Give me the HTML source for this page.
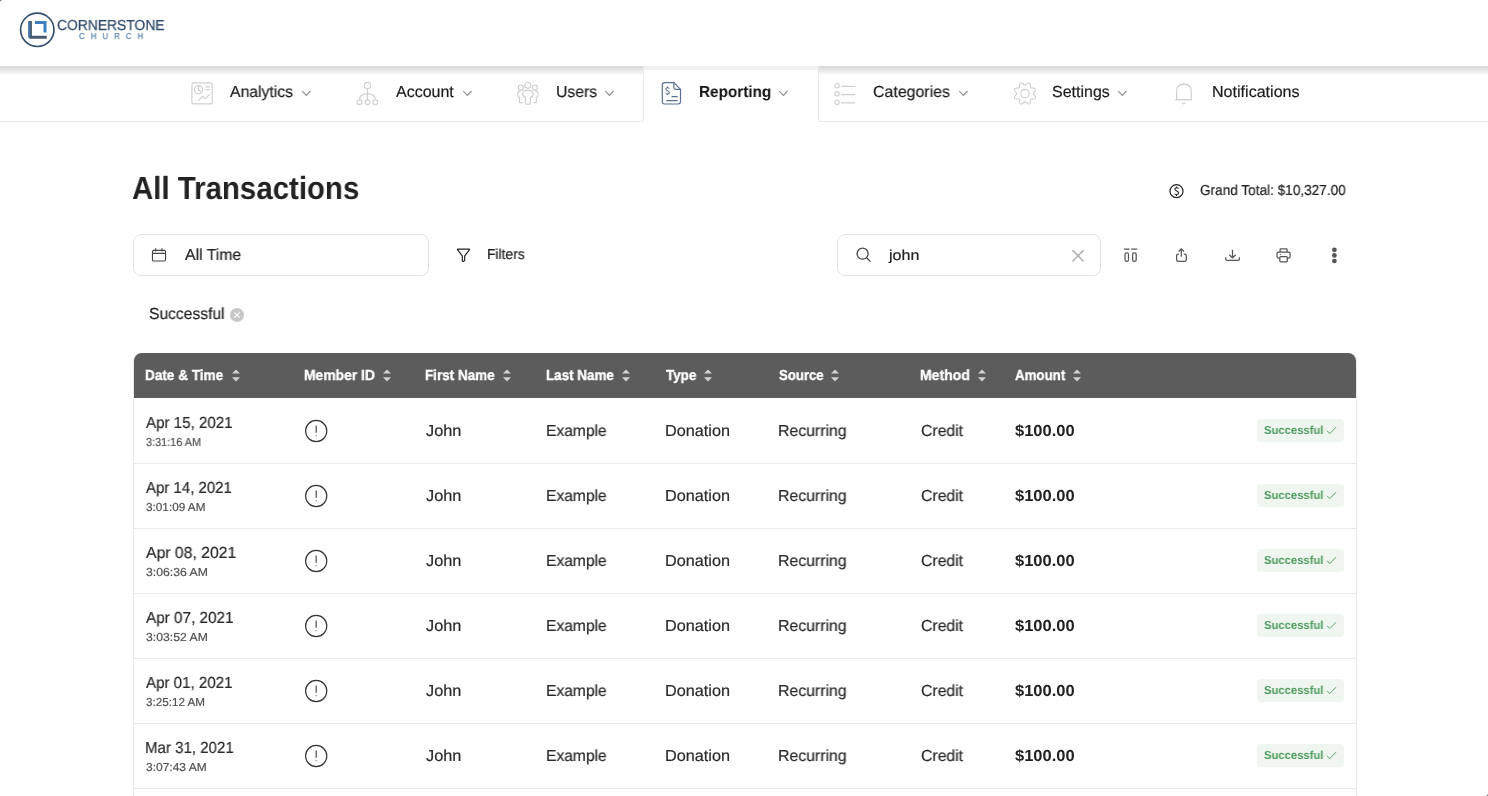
<!DOCTYPE html><html><head><meta charset="utf-8"><style>
html,body{margin:0;padding:0;background:#fff;width:1488px;height:796px;overflow:hidden;position:relative}
.t{will-change:transform}
.r{-webkit-text-stroke:0.2px currentColor}
body{font-family:"Liberation Sans",sans-serif;text-rendering:geometricPrecision}
.a{position:absolute}
.t{position:absolute;white-space:nowrap;line-height:1;transform-origin:0 0}
svg{overflow:visible}
</style></head><body>
<div class="a" style="left:0;top:0;width:1px;height:1px;background:#7a7a7a"></div><div class="a" style="left:1px;top:0;width:1px;height:1px;background:#d0d0d0"></div><div class="a" style="left:0;top:1px;width:1px;height:1px;background:#d0d0d0"></div>
<div class="a" style="left:1487px;top:795px;width:1px;height:1px;background:#7a7a7a"></div><div class="a" style="left:1486px;top:795px;width:1px;height:1px;background:#d0d0d0"></div><div class="a" style="left:1487px;top:794px;width:1px;height:1px;background:#d0d0d0"></div>
<svg class="a" style="left:0;top:0" width="180" height="60" viewBox="0 0 180 60">
<circle cx="37.3" cy="29.8" r="16.7" fill="none" stroke="#36516f" stroke-width="1.7"/>
<path d="M28.3 21 h3.6 v14.7 h14.9 v3 h-16.5 a2 2 0 0 1 -2 -2 z" fill="#4a5a6c"/>
<path d="M28.6 22 h1.6 v15.6 h-1.6 z" fill="#3b78b8"/>
<path d="M34.9 21 h11.6 v11.6 h-3 v-8.6 h-8.6 z" fill="#3d80c0"/>
</svg>
<div class="t r" style="left:57.01px;top:19px;font-size:14.5px;color:#2f4a68;transform:scaleX(0.9561);-webkit-text-stroke:0.25px #2f4a68;">CORNERSTONE</div>
<div class="t r" style="left:78.60px;top:32px;font-size:8.7px;color:#5b87b0;letter-spacing:6.5px;transform:scaleX(0.9169);-webkit-text-stroke:0.25px #5b87b0;">CHURCH</div>
<div class="a" style="left:0;top:66px;width:644px;height:56px;box-sizing:border-box;border-right:1px solid #e9e9e9;border-bottom:1px solid #e9e9e9;border-radius:0 0 3px 0;background:linear-gradient(#d9d9d9 0px,#e0e1e1 3px,#e8e8e8 4.5px,#f0f1f1 6.5px,#fafafa 8px,#fff 9px)"></div>
<div class="a" style="left:818px;top:66px;width:670px;height:56px;box-sizing:border-box;border-left:1px solid #e9e9e9;border-bottom:1px solid #e9e9e9;border-radius:0 0 0 3px;background:linear-gradient(#d9d9d9 0px,#e0e1e1 3px,#e8e8e8 4.5px,#f0f1f1 6.5px,#fafafa 8px,#fff 9px)"></div>
<div class="a" style="left:644px;top:66px;width:174px;height:4px;background:#f0f1f1"></div>
<div class="t r" style="left:230.36px;top:85px;font-size:16.0px;color:#1c1c1c;transform:scaleX(0.9852);">Analytics</div>
<div class="t r" style="left:395.96px;top:85px;font-size:16.0px;color:#1c1c1c;">Account</div>
<div class="t r" style="left:555.78px;top:85px;font-size:16.0px;color:#1c1c1c;transform:scaleX(0.9850);">Users</div>
<div class="t" style="left:698.97px;top:85px;font-size:16.0px;font-weight:700;color:#111;transform:scaleX(0.9564);">Reporting</div>
<div class="t r" style="left:873.21px;top:85px;font-size:16.0px;color:#1c1c1c;transform:scaleX(0.9934);">Categories</div>
<div class="t r" style="left:1052.28px;top:85px;font-size:16.0px;color:#1c1c1c;transform:scaleX(0.9979);">Settings</div>
<div class="t r" style="left:1211.57px;top:85px;font-size:16.0px;color:#1c1c1c;transform:scaleX(1.0049);">Notifications</div>
<svg class="a" style="left:301.7px;top:90px" width="10" height="7" viewBox="0 0 10 7"><path d="M0.3 1.1 L4.4 5.3 L8.5 1.0" fill="none" stroke="#8f8f8f" stroke-width="1.2"/></svg>
<svg class="a" style="left:462.7px;top:90px" width="10" height="7" viewBox="0 0 10 7"><path d="M0.3 1.1 L4.4 5.3 L8.5 1.0" fill="none" stroke="#8f8f8f" stroke-width="1.2"/></svg>
<svg class="a" style="left:605.1px;top:90px" width="10" height="7" viewBox="0 0 10 7"><path d="M0.3 1.1 L4.4 5.3 L8.5 1.0" fill="none" stroke="#8f8f8f" stroke-width="1.2"/></svg>
<svg class="a" style="left:778.9px;top:90px" width="10" height="7" viewBox="0 0 10 7"><path d="M0.3 1.1 L4.4 5.3 L8.5 1.0" fill="none" stroke="#8f8f8f" stroke-width="1.2"/></svg>
<svg class="a" style="left:958.5px;top:90px" width="10" height="7" viewBox="0 0 10 7"><path d="M0.3 1.1 L4.4 5.3 L8.5 1.0" fill="none" stroke="#8f8f8f" stroke-width="1.2"/></svg>
<svg class="a" style="left:1118.2px;top:90px" width="10" height="7" viewBox="0 0 10 7"><path d="M0.3 1.1 L4.4 5.3 L8.5 1.0" fill="none" stroke="#8f8f8f" stroke-width="1.2"/></svg>
<svg class="a" style="left:190px;top:81px" width="24" height="24" viewBox="0 0 24 24" fill="none" stroke="#cfcfcf" stroke-width="1.15">
<rect x="1.9" y="1.8" width="20.3" height="21" rx="1.6"/>
<circle cx="8.5" cy="8.7" r="4.1"/><path d="M8.5 4.6 V8.7 L11.4 11.6"/>
<path d="M15.6 5.9 h4.2 M15.6 8.7 h4.2" stroke-width="1.3"/>
<path d="M8.3 19.6 L12.6 15.3 L15.4 17.6 L19.8 13.4"/>
</svg>
<svg class="a" style="left:356px;top:82px" width="23" height="24" viewBox="0 0 23 24" fill="none" stroke="#cfcfcf" stroke-width="1.15">
<circle cx="11.5" cy="3.4" r="3.1"/><path d="M11.5 6.5 V17.8"/>
<path d="M3.5 17.6 Q3.6 11.8 11.5 11.8 Q19.3 11.8 19.3 17.6"/>
<circle cx="3.5" cy="20.2" r="2.4"/><circle cx="11.5" cy="20.2" r="2.4"/><circle cx="19.3" cy="20.2" r="2.4"/>
</svg>
<svg class="a" style="left:515px;top:81px" width="26" height="25" viewBox="0 0 26 25" fill="none" stroke="#cfcfcf" stroke-width="1.15">
<circle cx="12.85" cy="4.2" r="3"/><circle cx="5.9" cy="6.5" r="2.5"/><circle cx="19.9" cy="6.5" r="2.5"/>
<path d="M10.4 16.4 Q7.6 15.6 7.6 12.8 Q7.6 9.1 12.85 9.1 Q18.1 9.1 18.1 12.8 Q18.1 15.6 15.4 16.4 V22 Q15.4 23.3 12.85 23.3 Q10.4 23.3 10.4 22 Z"/>
<path d="M6.2 9.6 Q2.7 10 2.7 13.6 Q2.7 15.6 4.5 16.6 V21.6 H7.4"/>
<path d="M19.6 9.6 Q23.1 10 23.1 13.6 Q23.1 15.6 21.3 16.6 V21.6 H18.4"/>
</svg>
<svg class="a" style="left:660px;top:81px" width="23" height="25" viewBox="0 0 23 25" fill="none" stroke="#5a7191" stroke-width="1.2" stroke-linejoin="round">
<path d="M4.6 1.6 H13.9 L20.5 8.3 V20.6 Q20.5 23 18.1 23 H4.7 Q2.3 23 2.3 20.6 V4 Q2.3 1.6 4.6 1.6 Z"/>
<path d="M13.9 1.6 V6.8 Q13.9 8.3 15.4 8.3 H20.5"/>
<path d="M11.5 15.5 H17.7 M6.3 19.6 H17.7" stroke-width="1.25"/>
<path d="M9.3 7.6 Q8.9 6.8 7.5 6.8 Q5.8 6.8 5.8 8.1 Q5.8 9.2 7.5 9.8 Q9.3 10.4 9.3 11.7 Q9.3 13 7.5 13 Q6.1 13 5.6 12.2 M7.4 5.6 V6.8 M7.4 13 V14.1" stroke-width="1.1"/>
</svg>
<svg class="a" style="left:833px;top:82px" width="24" height="24" viewBox="0 0 24 24" fill="none" stroke="#cfcfcf" stroke-width="1.15">
<circle cx="4.06" cy="3.7" r="2.2"/><circle cx="4.06" cy="11.85" r="2.2"/><circle cx="4.06" cy="20.15" r="2.2"/>
<path d="M8.2 4.3 H22.2 M8.2 12.6 H22.2 M8.2 20.9 H22.2" stroke-width="1.25"/>
</svg>
<svg class="a" style="left:1011.6px;top:81px" width="26" height="25" viewBox="0 0 26 25" fill="none" stroke="#cfcfcf" stroke-width="1.15" stroke-linejoin="round">
<path d="M13.00 4.25 L13.44 4.13 L13.92 3.79 L14.46 3.29 L15.07 2.76 L15.74 2.29 L16.42 1.99 L17.06 1.94 L17.60 2.16 L18.02 2.65 L18.29 3.34 L18.43 4.15 L18.48 4.96 L18.51 5.69 L18.61 6.27 L18.83 6.67 L19.23 6.89 L19.81 6.99 L20.54 7.02 L21.35 7.07 L22.16 7.21 L22.85 7.48 L23.34 7.90 L23.56 8.44 L23.51 9.08 L23.21 9.76 L22.74 10.43 L22.21 11.04 L21.71 11.58 L21.37 12.06 L21.25 12.50 L21.37 12.94 L21.71 13.42 L22.21 13.96 L22.74 14.57 L23.21 15.24 L23.51 15.92 L23.56 16.56 L23.34 17.10 L22.85 17.52 L22.16 17.79 L21.35 17.93 L20.54 17.98 L19.81 18.01 L19.23 18.11 L18.83 18.33 L18.61 18.73 L18.51 19.31 L18.48 20.04 L18.43 20.85 L18.29 21.66 L18.02 22.35 L17.60 22.84 L17.06 23.06 L16.42 23.01 L15.74 22.71 L15.07 22.24 L14.46 21.71 L13.92 21.21 L13.44 20.87 L13.00 20.75 L12.56 20.87 L12.08 21.21 L11.54 21.71 L10.93 22.24 L10.26 22.71 L9.58 23.01 L8.94 23.06 L8.40 22.84 L7.98 22.35 L7.71 21.66 L7.57 20.85 L7.52 20.04 L7.49 19.31 L7.39 18.73 L7.17 18.33 L6.77 18.11 L6.19 18.01 L5.46 17.98 L4.65 17.93 L3.84 17.79 L3.15 17.52 L2.66 17.10 L2.44 16.56 L2.49 15.92 L2.79 15.24 L3.26 14.57 L3.79 13.96 L4.29 13.42 L4.63 12.94 L4.75 12.50 L4.63 12.06 L4.29 11.58 L3.79 11.04 L3.26 10.43 L2.79 9.76 L2.49 9.08 L2.44 8.44 L2.66 7.90 L3.15 7.48 L3.84 7.21 L4.65 7.07 L5.46 7.02 L6.19 6.99 L6.77 6.89 L7.17 6.67 L7.39 6.27 L7.49 5.69 L7.52 4.96 L7.57 4.15 L7.71 3.34 L7.98 2.65 L8.40 2.16 L8.94 1.94 L9.58 1.99 L10.26 2.29 L10.93 2.76 L11.54 3.29 L12.08 3.79 L12.56 4.13 Z"/>
<circle cx="13" cy="12.5" r="4.2"/>
</svg>
<svg class="a" style="left:1174px;top:81px" width="20" height="26" viewBox="0 0 20 26" fill="none" stroke="#cfcfcf" stroke-width="1.15">
<path d="M9.9 1.3 v1.8"/>
<path d="M2.6 18.6 V10.5 Q2.6 3.1 9.9 3.1 Q17.3 3.1 17.3 10.5 V18.6"/>
<path d="M1.3 18.7 H18.3" stroke-width="1.3"/>
<path d="M8.2 21.6 L9.8 22.9 L11.4 21.6"/>
</svg>
<div class="t" style="left:132.36px;top:172px;font-size:32.0px;font-weight:700;color:#222;transform:scaleX(0.9195);">All Transactions</div>
<svg class="a" style="left:1168px;top:184px" width="17" height="16" viewBox="0 0 17 16" fill="none" stroke="#222" stroke-width="1.2">
<circle cx="8.5" cy="7.2" r="6.5"/>
</svg>
<svg class="a" style="left:1168px;top:184px" width="17" height="16" viewBox="0 0 17 16" fill="none" stroke="#222" stroke-width="1.1"><path d="M10.6 4.6 Q10.2 3.8 8.6 3.8 Q6.8 3.8 6.8 5.1 Q6.8 6.2 8.6 6.9 Q10.6 7.7 10.6 9 Q10.6 10.5 8.6 10.5 Q7.1 10.5 6.6 9.7 M8.5 2.4 v1.4 M8.5 10.5 v1.4"/></svg>
<div class="t r" style="left:1200.22px;top:184px;font-size:14.5px;color:#222;transform:scaleX(0.9382);">Grand Total: $10,327.00</div>
<div class="a" style="left:133px;top:234px;width:296px;height:42px;border:1px solid #e3e3e3;border-radius:8px;box-sizing:border-box"></div>
<svg class="a" style="left:151px;top:247px" width="16" height="16" viewBox="0 0 16 16" fill="none" stroke="#444" stroke-width="1.1">
<rect x="1.45" y="3.35" width="13.1" height="10.7" rx="1.2"/><path d="M1.45 6.4 h13.1 M4.7 1.2 v3.2 M11.0 1.2 v3.2" />
</svg>
<div class="t r" style="left:184.76px;top:248px;font-size:16.0px;color:#222;transform:scaleX(0.9865);">All Time</div>
<svg class="a" style="left:456px;top:248px" width="15" height="15" viewBox="0 0 15 15" fill="none" stroke="#222" stroke-width="1.2">
<path d="M1.9 1.2 H13.1 Q13.9 1.2 13.4 1.9 L8.7 7.9 V12 Q8.7 13.2 7.4 13.4 Q6.3 13.6 6.3 12.5 V7.9 L1.6 1.9 Q1.1 1.2 1.9 1.2 Z" stroke-linejoin="round"/>
</svg>
<div class="t r" style="left:486.56px;top:248px;font-size:14.5px;color:#222;transform:scaleX(0.9557);">Filters</div>
<div class="a" style="left:837px;top:234px;width:264px;height:42px;border:1px solid #e3e3e3;border-radius:8px;box-sizing:border-box"></div>
<svg class="a" style="left:855px;top:247px" width="18" height="17" viewBox="0 0 18 17" fill="none" stroke="#444" stroke-width="1.3">
<circle cx="7.6" cy="6.7" r="5.5"/><path d="M11.6 10.7 L15.5 14.6"/>
</svg>
<div class="t r" style="left:889.10px;top:249px;font-size:14.5px;color:#222;transform:scaleX(1.1072);">john</div>
<svg class="a" style="left:1070px;top:248px" width="16" height="16" viewBox="0 0 16 16" fill="none" stroke="#b3b3b3" stroke-width="1.6" stroke-linecap="round">
<path d="M2.9 2.6 L13.2 13 M13.2 2.6 L2.9 13"/>
</svg>
<svg class="a" style="left:1122px;top:246px" width="17" height="18" viewBox="0 0 17 18" fill="none" stroke="#555" stroke-width="1.25">
<path d="M1.9 3.15 h5.6 M9.2 3.15 h6"/>
<rect x="3.0" y="6.8" width="3.5" height="8.5" rx="1.6"/><rect x="10.6" y="6.8" width="3.6" height="8.5" rx="1.6"/>
</svg>
<svg class="a" style="left:1174px;top:247px" width="15" height="17" viewBox="0 0 15 17" fill="none" stroke="#555" stroke-width="1.25">
<path d="M7.3 9.8 V1.9 M4.7 4.5 L7.3 1.8 L10.0 4.5"/>
<path d="M5.0 7.1 H4.2 Q2.6 7.1 2.6 8.7 V12.7 Q2.6 14.3 4.2 14.3 H10.7 Q12.3 14.3 12.3 12.7 V8.7 Q12.3 7.1 10.7 7.1 H9.8"/>
</svg>
<svg class="a" style="left:1224px;top:248px" width="17" height="15" viewBox="0 0 17 15" fill="none" stroke="#555" stroke-width="1.25">
<path d="M8.5 1.7 V9.8 M5.3 6.7 L8.5 9.9 L11.7 6.7"/>
<path d="M1.7 9.3 V11 Q1.7 12.4 3.1 12.4 H14 Q15.4 12.4 15.4 11 V9.3"/>
</svg>
<svg class="a" style="left:1275px;top:247px" width="18" height="17" viewBox="0 0 18 17" fill="none" stroke="#555" stroke-width="1.25">
<path d="M5.1 5 V2.6 Q5.1 1.9 5.9 1.9 H11.3 Q12.1 1.9 12.1 2.6 V5"/>
<path d="M4.6 11 H3.6 Q2 11 2 9.4 V6.6 Q2 5 3.6 5 H13.5 Q15.1 5 15.1 6.6 V9.4 Q15.1 11 13.5 11 H12.5"/>
<rect x="4.8" y="9.7" width="7.5" height="5.1" rx="1"/>
<path d="M4.9 7.5 h0.9" stroke-width="1"/>
</svg>
<svg class="a" style="left:1330px;top:246px" width="9" height="18" viewBox="0 0 9 18" fill="#555">
<circle cx="4.4" cy="3.8" r="2.35"/><circle cx="4.4" cy="9.4" r="2.35"/><circle cx="4.4" cy="15" r="2.35"/>
</svg>
<div class="t r" style="left:148.60px;top:307px;font-size:16.0px;color:#222;transform:scaleX(0.9767);">Successful</div>
<svg class="a" style="left:229px;top:307px" width="16" height="16" viewBox="0 0 16 16">
<circle cx="8" cy="8" r="7" fill="#c8c8c8"/><path d="M5.3 5.3 L10.7 10.7 M10.7 5.3 L5.3 10.7" stroke="#fff" stroke-width="1.1"/>
</svg>
<div class="a" style="left:133px;top:353px;width:1224px;height:450px;border:1px solid #e9e9e9;border-radius:8px 8px 0 0;box-sizing:border-box"></div>
<div class="a" style="left:134px;top:353px;width:1222px;height:45px;background:#5c5c5c;border-radius:8px 8px 0 0"></div>
<div class="t" style="left:145.28px;top:369px;font-size:14.5px;font-weight:700;color:#fff;transform:scaleX(0.9358);-webkit-text-stroke:0.35px #fff;">Date &amp; Time</div>
<svg class="a" style="left:232.0px;top:368.5px" width="9" height="13" viewBox="0 0 9 13" fill="#d2d2d2"><path d="M4 0.4 L8 4.6 H0 Z M4 12.4 L8 8.2 H0 Z"/></svg>
<div class="t" style="left:303.56px;top:369px;font-size:14.5px;font-weight:700;color:#fff;transform:scaleX(0.9554);-webkit-text-stroke:0.35px #fff;">Member ID</div>
<svg class="a" style="left:382.5px;top:368.5px" width="9" height="13" viewBox="0 0 9 13" fill="#d2d2d2"><path d="M4 0.4 L8 4.6 H0 Z M4 12.4 L8 8.2 H0 Z"/></svg>
<div class="t" style="left:425.49px;top:369px;font-size:14.5px;font-weight:700;color:#fff;transform:scaleX(0.9282);-webkit-text-stroke:0.35px #fff;">First Name</div>
<svg class="a" style="left:503.3px;top:368.5px" width="9" height="13" viewBox="0 0 9 13" fill="#d2d2d2"><path d="M4 0.4 L8 4.6 H0 Z M4 12.4 L8 8.2 H0 Z"/></svg>
<div class="t" style="left:546.29px;top:369px;font-size:14.5px;font-weight:700;color:#fff;transform:scaleX(0.9251);-webkit-text-stroke:0.35px #fff;">Last Name</div>
<svg class="a" style="left:621.8px;top:368.5px" width="9" height="13" viewBox="0 0 9 13" fill="#d2d2d2"><path d="M4 0.4 L8 4.6 H0 Z M4 12.4 L8 8.2 H0 Z"/></svg>
<div class="t" style="left:666.13px;top:369px;font-size:14.5px;font-weight:700;color:#fff;transform:scaleX(0.9258);-webkit-text-stroke:0.35px #fff;">Type</div>
<svg class="a" style="left:703.9px;top:368.5px" width="9" height="13" viewBox="0 0 9 13" fill="#d2d2d2"><path d="M4 0.4 L8 4.6 H0 Z M4 12.4 L8 8.2 H0 Z"/></svg>
<div class="t" style="left:778.61px;top:369px;font-size:14.5px;font-weight:700;color:#fff;transform:scaleX(0.9078);-webkit-text-stroke:0.35px #fff;">Source</div>
<svg class="a" style="left:830.8px;top:368.5px" width="9" height="13" viewBox="0 0 9 13" fill="#d2d2d2"><path d="M4 0.4 L8 4.6 H0 Z M4 12.4 L8 8.2 H0 Z"/></svg>
<div class="t" style="left:920.15px;top:369px;font-size:14.5px;font-weight:700;color:#fff;transform:scaleX(0.9672);-webkit-text-stroke:0.35px #fff;">Method</div>
<svg class="a" style="left:978.2px;top:368.5px" width="9" height="13" viewBox="0 0 9 13" fill="#d2d2d2"><path d="M4 0.4 L8 4.6 H0 Z M4 12.4 L8 8.2 H0 Z"/></svg>
<div class="t" style="left:1014.97px;top:369px;font-size:14.5px;font-weight:700;color:#fff;transform:scaleX(0.9165);-webkit-text-stroke:0.35px #fff;">Amount</div>
<svg class="a" style="left:1073.0px;top:368.5px" width="9" height="13" viewBox="0 0 9 13" fill="#d2d2d2"><path d="M4 0.4 L8 4.6 H0 Z M4 12.4 L8 8.2 H0 Z"/></svg>
<div class="a" style="left:134px;top:463px;width:1222px;height:1px;background:#eaeaea"></div>
<div class="t r" style="left:146.16px;top:416px;font-size:16.0px;color:#2a2a2a;transform:scaleX(0.9449);">Apr 15, 2021</div>
<div class="t r" style="left:145.79px;top:437px;font-size:11.6px;color:#505050;transform:scaleX(0.9389);">3:31:16 AM</div>
<svg class="a" style="left:303.5px;top:419px" width="24" height="24" viewBox="0 0 24 24" fill="none" stroke="#333" stroke-width="1.2">
<circle cx="12.2" cy="12" r="10.6" stroke-width="1.15"/><path d="M12.2 6.4 V13.8" stroke-width="1.4" stroke="#666"/><path d="M11.6 16.6 H12.8" stroke-width="1.1" stroke="#888"/></svg>
<div class="t r" style="left:425.76px;top:424px;font-size:16.0px;color:#2a2a2a;transform:scaleX(1.0180);">John</div>
<div class="t r" style="left:546.31px;top:424px;font-size:16.0px;color:#2a2a2a;transform:scaleX(0.9744);">Example</div>
<div class="t r" style="left:665.16px;top:424px;font-size:16.0px;color:#2a2a2a;transform:scaleX(1.0149);">Donation</div>
<div class="t r" style="left:778.09px;top:424px;font-size:16.0px;color:#2a2a2a;transform:scaleX(0.9890);">Recurring</div>
<div class="t r" style="left:921.01px;top:424px;font-size:16.0px;color:#2a2a2a;transform:scaleX(0.9842);">Credit</div>
<div class="t" style="left:1015.29px;top:424px;font-size:16.0px;font-weight:700;color:#222;transform:scaleX(1.0305);">$100.00</div>
<div class="a" style="left:1257px;top:419px;width:87px;height:23px;background:#eef6ef;border-radius:4px"></div>
<div class="t" style="left:1264.16px;top:425px;font-size:11.6px;font-weight:700;color:#4d9a5c;transform:scaleX(0.9702);">Successful</div>
<svg class="a" style="left:1325.5px;top:426px" width="11" height="9" viewBox="0 0 11 9" fill="none" stroke="#5aa268" stroke-width="1"><path d="M1 4.8 L3.8 7.6 L10 1.2"/></svg>
<div class="a" style="left:134px;top:528px;width:1222px;height:1px;background:#eaeaea"></div>
<div class="t r" style="left:146.16px;top:481px;font-size:16.0px;color:#2a2a2a;transform:scaleX(0.9361);">Apr 14, 2021</div>
<div class="t r" style="left:145.76px;top:502px;font-size:11.6px;color:#505050;transform:scaleX(1.0139);">3:01:09 AM</div>
<svg class="a" style="left:303.5px;top:484px" width="24" height="24" viewBox="0 0 24 24" fill="none" stroke="#333" stroke-width="1.2">
<circle cx="12.2" cy="12" r="10.6" stroke-width="1.15"/><path d="M12.2 6.4 V13.8" stroke-width="1.4" stroke="#666"/><path d="M11.6 16.6 H12.8" stroke-width="1.1" stroke="#888"/></svg>
<div class="t r" style="left:425.76px;top:489px;font-size:16.0px;color:#2a2a2a;transform:scaleX(1.0180);">John</div>
<div class="t r" style="left:546.31px;top:489px;font-size:16.0px;color:#2a2a2a;transform:scaleX(0.9744);">Example</div>
<div class="t r" style="left:665.16px;top:489px;font-size:16.0px;color:#2a2a2a;transform:scaleX(1.0149);">Donation</div>
<div class="t r" style="left:778.09px;top:489px;font-size:16.0px;color:#2a2a2a;transform:scaleX(0.9890);">Recurring</div>
<div class="t r" style="left:921.01px;top:489px;font-size:16.0px;color:#2a2a2a;transform:scaleX(0.9842);">Credit</div>
<div class="t" style="left:1015.29px;top:489px;font-size:16.0px;font-weight:700;color:#222;transform:scaleX(1.0305);">$100.00</div>
<div class="a" style="left:1257px;top:484px;width:87px;height:23px;background:#eef6ef;border-radius:4px"></div>
<div class="t" style="left:1264.16px;top:490px;font-size:11.6px;font-weight:700;color:#4d9a5c;transform:scaleX(0.9702);">Successful</div>
<svg class="a" style="left:1325.5px;top:491px" width="11" height="9" viewBox="0 0 11 9" fill="none" stroke="#5aa268" stroke-width="1"><path d="M1 4.8 L3.8 7.6 L10 1.2"/></svg>
<div class="a" style="left:134px;top:593px;width:1222px;height:1px;background:#eaeaea"></div>
<div class="t r" style="left:146.16px;top:546px;font-size:16.0px;color:#2a2a2a;transform:scaleX(0.9846);">Apr 08, 2021</div>
<div class="t r" style="left:145.74px;top:567px;font-size:11.6px;color:#505050;transform:scaleX(1.0540);">3:06:36 AM</div>
<svg class="a" style="left:303.5px;top:549px" width="24" height="24" viewBox="0 0 24 24" fill="none" stroke="#333" stroke-width="1.2">
<circle cx="12.2" cy="12" r="10.6" stroke-width="1.15"/><path d="M12.2 6.4 V13.8" stroke-width="1.4" stroke="#666"/><path d="M11.6 16.6 H12.8" stroke-width="1.1" stroke="#888"/></svg>
<div class="t r" style="left:425.76px;top:554px;font-size:16.0px;color:#2a2a2a;transform:scaleX(1.0180);">John</div>
<div class="t r" style="left:546.31px;top:554px;font-size:16.0px;color:#2a2a2a;transform:scaleX(0.9744);">Example</div>
<div class="t r" style="left:665.16px;top:554px;font-size:16.0px;color:#2a2a2a;transform:scaleX(1.0149);">Donation</div>
<div class="t r" style="left:778.09px;top:554px;font-size:16.0px;color:#2a2a2a;transform:scaleX(0.9890);">Recurring</div>
<div class="t r" style="left:921.01px;top:554px;font-size:16.0px;color:#2a2a2a;transform:scaleX(0.9842);">Credit</div>
<div class="t" style="left:1015.29px;top:554px;font-size:16.0px;font-weight:700;color:#222;transform:scaleX(1.0305);">$100.00</div>
<div class="a" style="left:1257px;top:549px;width:87px;height:23px;background:#eef6ef;border-radius:4px"></div>
<div class="t" style="left:1264.16px;top:555px;font-size:11.6px;font-weight:700;color:#4d9a5c;transform:scaleX(0.9702);">Successful</div>
<svg class="a" style="left:1325.5px;top:556px" width="11" height="9" viewBox="0 0 11 9" fill="none" stroke="#5aa268" stroke-width="1"><path d="M1 4.8 L3.8 7.6 L10 1.2"/></svg>
<div class="a" style="left:134px;top:658px;width:1222px;height:1px;background:#eaeaea"></div>
<div class="t r" style="left:146.16px;top:611px;font-size:16.0px;color:#2a2a2a;transform:scaleX(0.9548);">Apr 07, 2021</div>
<div class="t r" style="left:145.74px;top:632px;font-size:11.6px;color:#505050;transform:scaleX(1.0540);">3:03:52 AM</div>
<svg class="a" style="left:303.5px;top:614px" width="24" height="24" viewBox="0 0 24 24" fill="none" stroke="#333" stroke-width="1.2">
<circle cx="12.2" cy="12" r="10.6" stroke-width="1.15"/><path d="M12.2 6.4 V13.8" stroke-width="1.4" stroke="#666"/><path d="M11.6 16.6 H12.8" stroke-width="1.1" stroke="#888"/></svg>
<div class="t r" style="left:425.76px;top:619px;font-size:16.0px;color:#2a2a2a;transform:scaleX(1.0180);">John</div>
<div class="t r" style="left:546.31px;top:619px;font-size:16.0px;color:#2a2a2a;transform:scaleX(0.9744);">Example</div>
<div class="t r" style="left:665.16px;top:619px;font-size:16.0px;color:#2a2a2a;transform:scaleX(1.0149);">Donation</div>
<div class="t r" style="left:778.09px;top:619px;font-size:16.0px;color:#2a2a2a;transform:scaleX(0.9890);">Recurring</div>
<div class="t r" style="left:921.01px;top:619px;font-size:16.0px;color:#2a2a2a;transform:scaleX(0.9842);">Credit</div>
<div class="t" style="left:1015.29px;top:619px;font-size:16.0px;font-weight:700;color:#222;transform:scaleX(1.0305);">$100.00</div>
<div class="a" style="left:1257px;top:614px;width:87px;height:23px;background:#eef6ef;border-radius:4px"></div>
<div class="t" style="left:1264.16px;top:620px;font-size:11.6px;font-weight:700;color:#4d9a5c;transform:scaleX(0.9702);">Successful</div>
<svg class="a" style="left:1325.5px;top:621px" width="11" height="9" viewBox="0 0 11 9" fill="none" stroke="#5aa268" stroke-width="1"><path d="M1 4.8 L3.8 7.6 L10 1.2"/></svg>
<div class="a" style="left:134px;top:723px;width:1222px;height:1px;background:#eaeaea"></div>
<div class="t r" style="left:146.16px;top:676px;font-size:16.0px;color:#2a2a2a;transform:scaleX(0.9438);">Apr 01, 2021</div>
<div class="t r" style="left:145.76px;top:697px;font-size:11.6px;color:#505050;transform:scaleX(1.0052);">3:25:12 AM</div>
<svg class="a" style="left:303.5px;top:679px" width="24" height="24" viewBox="0 0 24 24" fill="none" stroke="#333" stroke-width="1.2">
<circle cx="12.2" cy="12" r="10.6" stroke-width="1.15"/><path d="M12.2 6.4 V13.8" stroke-width="1.4" stroke="#666"/><path d="M11.6 16.6 H12.8" stroke-width="1.1" stroke="#888"/></svg>
<div class="t r" style="left:425.76px;top:684px;font-size:16.0px;color:#2a2a2a;transform:scaleX(1.0180);">John</div>
<div class="t r" style="left:546.31px;top:684px;font-size:16.0px;color:#2a2a2a;transform:scaleX(0.9744);">Example</div>
<div class="t r" style="left:665.16px;top:684px;font-size:16.0px;color:#2a2a2a;transform:scaleX(1.0149);">Donation</div>
<div class="t r" style="left:778.09px;top:684px;font-size:16.0px;color:#2a2a2a;transform:scaleX(0.9890);">Recurring</div>
<div class="t r" style="left:921.01px;top:684px;font-size:16.0px;color:#2a2a2a;transform:scaleX(0.9842);">Credit</div>
<div class="t" style="left:1015.29px;top:684px;font-size:16.0px;font-weight:700;color:#222;transform:scaleX(1.0305);">$100.00</div>
<div class="a" style="left:1257px;top:679px;width:87px;height:23px;background:#eef6ef;border-radius:4px"></div>
<div class="t" style="left:1264.16px;top:685px;font-size:11.6px;font-weight:700;color:#4d9a5c;transform:scaleX(0.9702);">Successful</div>
<svg class="a" style="left:1325.5px;top:686px" width="11" height="9" viewBox="0 0 11 9" fill="none" stroke="#5aa268" stroke-width="1"><path d="M1 4.8 L3.8 7.6 L10 1.2"/></svg>
<div class="a" style="left:134px;top:788px;width:1222px;height:1px;background:#eaeaea"></div>
<div class="t r" style="left:144.96px;top:741px;font-size:16.0px;color:#2a2a2a;transform:scaleX(0.9403);">Mar 31, 2021</div>
<div class="t r" style="left:145.75px;top:762px;font-size:11.6px;color:#505050;transform:scaleX(1.0348);">3:07:43 AM</div>
<svg class="a" style="left:303.5px;top:744px" width="24" height="24" viewBox="0 0 24 24" fill="none" stroke="#333" stroke-width="1.2">
<circle cx="12.2" cy="12" r="10.6" stroke-width="1.15"/><path d="M12.2 6.4 V13.8" stroke-width="1.4" stroke="#666"/><path d="M11.6 16.6 H12.8" stroke-width="1.1" stroke="#888"/></svg>
<div class="t r" style="left:425.76px;top:749px;font-size:16.0px;color:#2a2a2a;transform:scaleX(1.0180);">John</div>
<div class="t r" style="left:546.31px;top:749px;font-size:16.0px;color:#2a2a2a;transform:scaleX(0.9744);">Example</div>
<div class="t r" style="left:665.16px;top:749px;font-size:16.0px;color:#2a2a2a;transform:scaleX(1.0149);">Donation</div>
<div class="t r" style="left:778.09px;top:749px;font-size:16.0px;color:#2a2a2a;transform:scaleX(0.9890);">Recurring</div>
<div class="t r" style="left:921.01px;top:749px;font-size:16.0px;color:#2a2a2a;transform:scaleX(0.9842);">Credit</div>
<div class="t" style="left:1015.29px;top:749px;font-size:16.0px;font-weight:700;color:#222;transform:scaleX(1.0305);">$100.00</div>
<div class="a" style="left:1257px;top:744px;width:87px;height:23px;background:#eef6ef;border-radius:4px"></div>
<div class="t" style="left:1264.16px;top:750px;font-size:11.6px;font-weight:700;color:#4d9a5c;transform:scaleX(0.9702);">Successful</div>
<svg class="a" style="left:1325.5px;top:751px" width="11" height="9" viewBox="0 0 11 9" fill="none" stroke="#5aa268" stroke-width="1"><path d="M1 4.8 L3.8 7.6 L10 1.2"/></svg>
</body></html>
